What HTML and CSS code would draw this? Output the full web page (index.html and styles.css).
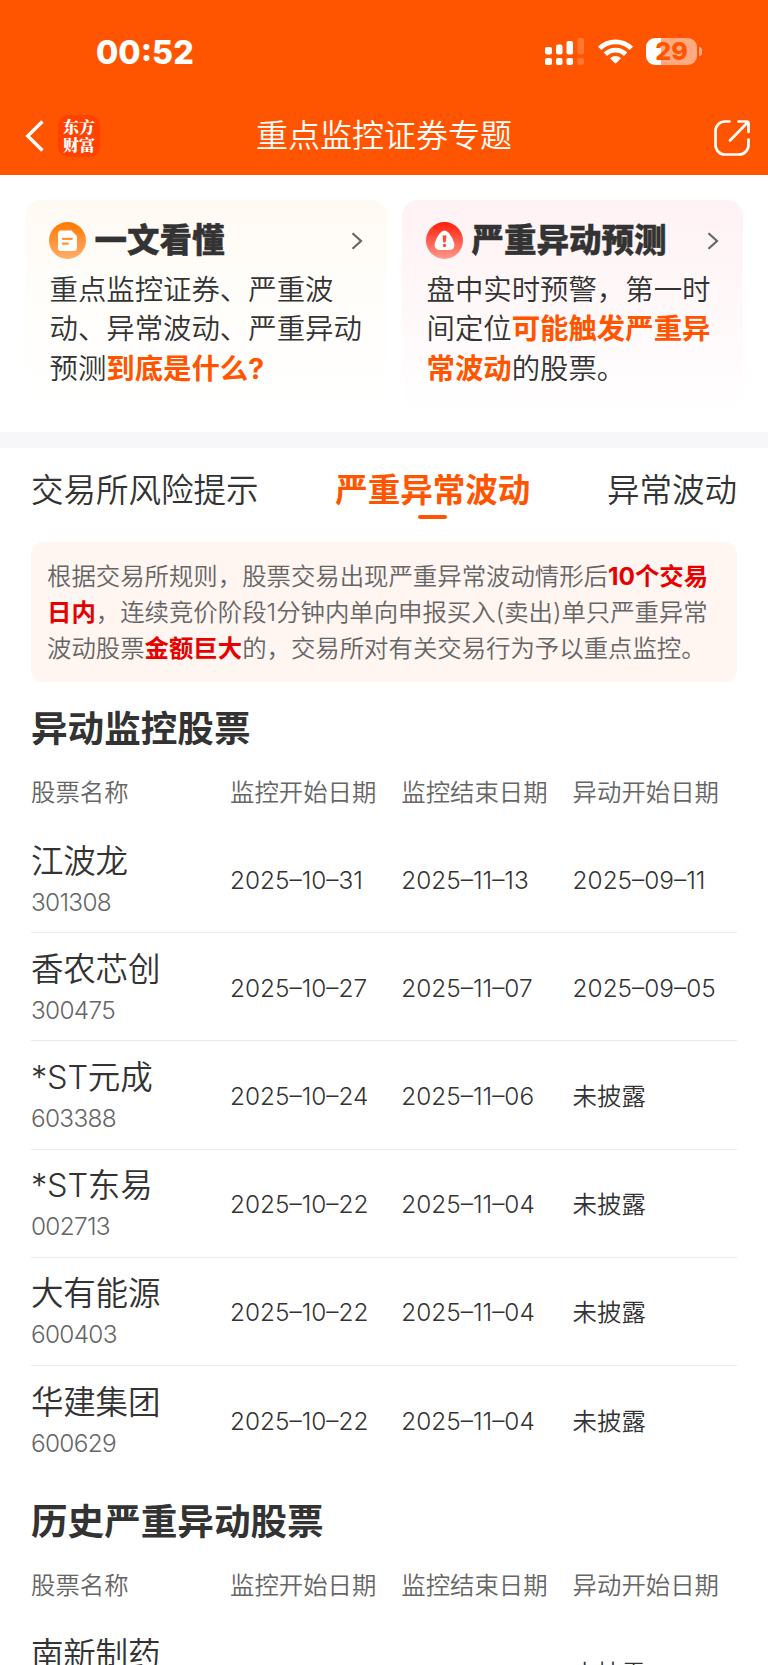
FILE: index.html
```html
<!DOCTYPE html>
<html lang="zh-CN">
<head>
    <meta charset="UTF-8">
    <meta name="viewport" content="width=device-width, initial-scale=1.0">
    <title>重点监控证券专题</title>
    <link rel="stylesheet" href="styles.css">
</head>
<body>

<header class="header">
    <div class="status-bar">
        <span class="time">00:52</span>
        <div class="status-icons">
            <svg width="39" height="27" viewBox="0 0 39 27" fill="#fff">
                <rect x="0" y="9" width="7" height="7.5" rx="2"/>
                <rect x="11" y="6.5" width="6.5" height="10" rx="2"/>
                <rect x="21.5" y="3" width="6.5" height="13.5" rx="2"/>
                <rect x="32.5" y="0" width="6.5" height="16.5" rx="2" opacity=".2"/>
                <rect x="0" y="20" width="7" height="7" rx="2"/>
                <rect x="11" y="20" width="6.5" height="7" rx="2"/>
                <rect x="21.5" y="20" width="6.5" height="7" rx="2"/>
                <rect x="32.5" y="20" width="6.5" height="7" rx="2" opacity=".2"/>
            </svg>
            <svg class="wifi" width="35" height="25" viewBox="0 0 35 25">
                <g fill="none" stroke="#fff" stroke-width="4.8">
                    <path d="M1.700 9.400a22.500 22.500 0 0 1 31.600 0"/>
                    <path d="M7.400 15.200a14.400 14.400 0 0 1 20.200 0"/>
                </g>
                <path fill="#fff" d="M12 19.200a8 8 0 0 1 11 0l-4.700 4.900q-.8.800-1.600 0z"/>
            </svg>
            <div class="battery"><span>29</span></div>
        </div>
    </div>
    <nav class="nav">
        <div class="nav-left">
            <svg width="20" height="32" viewBox="0 0 20 32" fill="none" stroke="#fff" stroke-width="3.4">
                <path d="M17.500 1.500 2.700 16l14.800 14.500"/>
            </svg>
            <div class="logo">东方<br>财富</div>
        </div>
        <h1>重点监控证券专题</h1>
        <svg class="share" width="36" height="36" viewBox="0 0 36 36" fill="none" stroke="#fff" stroke-width="2.700" stroke-linecap="round" stroke-linejoin="round">
            <path d="M15.500 1.500H11A9.500 9.500 0 0 0 1.500 11v14A9.500 9.500 0 0 0 11 34.500h14a9.500 9.500 0 0 0 9.500-9.500v-5.500"/>
            <path d="M24.500 1.500h8q2 0 2 2v8.500M34 2 16 20.500"/>
        </svg>
    </nav>
</header>

<section class="cards">
    <a class="card card-guide">
        <div class="card-head">
            <svg width="37" height="37" viewBox="0 0 37 37">
                <defs>
                    <linearGradient id="orange" x1="0" y1="0" x2="0" y2="1">
                        <stop offset="0" stop-color="#ff7a00"/>
                        <stop offset="1" stop-color="#ffae6b"/>
                    </linearGradient>
                </defs>
                <circle cx="18.500" cy="18.500" r="18.500" fill="url(#orange)"/>
                <path fill="#fff" d="M12 8.500h10.500l5.500 5.800V26a3 3 0 0 1-3 3H12a3 3 0 0 1-3-3V11.500a3 3 0 0 1 3-3z"/>
                <path d="M13.800 16.800h9M13.800 21.700h5" stroke="#ff9334" stroke-width="2.200" stroke-linecap="round"/>
            </svg>
            <h2>一文看懂</h2>
            <svg class="arrow" width="12" height="18" viewBox="0 0 12 18"><path d="M1.500 1.200 10 9l-8.500 7.800"/></svg>
        </div>
        <p>重点监控证券、严重波<br>动、异常波动、严重异动<br>预测<b>到底是什么?</b></p>
    </a>
    <a class="card card-predict">
        <div class="card-head">
            <svg width="37" height="37" viewBox="0 0 37 37">
                <defs>
                    <linearGradient id="red" x1="0" y1="0" x2="0" y2="1">
                        <stop offset="0" stop-color="#ff1e0a"/>
                        <stop offset="1" stop-color="#ff9a8c"/>
                    </linearGradient>
                </defs>
                <circle cx="18.500" cy="18.500" r="18.500" fill="url(#red)"/>
                <path fill="#fff" d="M14 11q4.500-5 9 0 4 5 5.300 10.500.8 6-4.800 6.500h-10q-5.600-.5-4.800-6.500Q10 16 14 11z"/>
                <path d="M16.500 13.500h4l-.8 7h-2.400z" fill="#ff4937"/>
                <circle cx="18.500" cy="23.400" r="1.700" fill="#ff4937"/>
            </svg>
            <h2>严重异动预测</h2>
            <svg class="arrow" width="12" height="18" viewBox="0 0 12 18"><path d="M1.500 1.200 10 9l-8.500 7.800"/></svg>
        </div>
        <p>盘中实时预警，第一时<br>间定位<b>可能触发严重异<br>常波动</b>的股票。</p>
    </a>
</section>

<div class="tabs">
    <a class="tab">交易所风险提示</a>
    <a class="tab active">严重异常波动</a>
    <a class="tab">异常波动</a>
</div>

<p class="notice">根据交易所规则，股票交易出现严重异常波动情形后<b>10个交易<br>日内</b>，连续竞价阶段1分钟内单向申报买入(卖出)单只严重异常<br>波动股票<b>金额巨大</b>的，交易所对有关交易行为予以重点监控。</p>

<section class="stocks">
    <h3>异动监控股票</h3>
    <div class="row row-head">
        <span>股票名称</span><span>监控开始日期</span><span>监控结束日期</span><span>异动开始日期</span>
    </div>
    <div class="row">
        <div class="stock"><strong>江波龙</strong><small>301308</small></div>
        <span>2025–10–31</span><span>2025–11–13</span><span>2025–09–11</span>
    </div>
    <div class="row">
        <div class="stock"><strong>香农芯创</strong><small>300475</small></div>
        <span>2025–10–27</span><span>2025–11–07</span><span>2025–09–05</span>
    </div>
    <div class="row">
        <div class="stock"><strong>*ST元成</strong><small>603388</small></div>
        <span>2025–10–24</span><span>2025–11–06</span><span>未披露</span>
    </div>
    <div class="row">
        <div class="stock"><strong>*ST东易</strong><small>002713</small></div>
        <span>2025–10–22</span><span>2025–11–04</span><span>未披露</span>
    </div>
    <div class="row">
        <div class="stock"><strong>大有能源</strong><small>600403</small></div>
        <span>2025–10–22</span><span>2025–11–04</span><span>未披露</span>
    </div>
    <div class="row">
        <div class="stock"><strong>华建集团</strong><small>600629</small></div>
        <span>2025–10–22</span><span>2025–11–04</span><span>未披露</span>
    </div>
</section>

<section class="stocks">
    <h3>历史严重异动股票</h3>
    <div class="row row-head">
        <span>股票名称</span><span>监控开始日期</span><span>监控结束日期</span><span>异动开始日期</span>
    </div>
    <div class="row">
        <div class="stock"><strong>南新制药</strong><small>&nbsp;</small></div>
        <span></span><span></span><span>未披露</span>
    </div>
</section>

</body>
</html>
```
FILE: styles.css
```css
* {
    box-sizing: border-box;
    margin: 0;
    padding: 0;
}

body {
    width: 768px;
    height: 1665px;
    overflow: hidden;
    background: #fff;
    color: #333;
    font-family: Inter, "Noto Sans CJK SC", sans-serif;
    font-weight: 350;
}

svg {
    display: block;
    flex-shrink: 0;
}

.header {
    height: 175px;
    background: #ff5500;
    color: #fff;
}

.status-bar {
    display: flex;
    justify-content: space-between;
    align-items: center;
    height: 103px;
    padding: 0 71px 0 96px;
}

.time {
    font-size: 32.3px;
    font-weight: 800;
    line-height: 40px;
    padding-top: 3px;
}

.status-icons {
    display: flex;
    align-items: center;
}

.wifi {
    margin: 0 13px 0 14px;
}

.battery {
    position: relative;
    width: 51px;
    height: 27px;
    border-radius: 9px;
    background: linear-gradient(90deg, #fff 15px, #ffaa80 15px);
    color: #ff5500;
    font-size: 25px;
    font-weight: 800;
    line-height: 27px;
    text-align: center;
}

.battery::after {
    content: "";
    position: absolute;
    right: -5px;
    top: 9px;
    width: 3px;
    height: 9px;
    border-radius: 0 4px 4px 0;
    background: #ffaa80;
}

.nav {
    display: grid;
    grid-template-columns: 1fr auto 1fr;
    align-items: center;
    height: 66px;
    padding: 0 18px;
}

.nav-left {
    display: flex;
    align-items: center;
    gap: 13px;
    padding-left: 7px;
}

.logo {
    width: 42px;
    height: 42px;
    padding-top: 3px;
    border-radius: 10px;
    background: #ff4200;
    font-family: "Noto Serif CJK SC", "Noto Sans CJK SC", sans-serif;
    font-size: 16px;
    font-weight: 900;
    line-height: 17.5px;
    text-align: center;
}

.nav h1 {
    font-size: 32px;
    font-weight: 350;
    line-height: 44px;
}

.share {
    justify-self: end;
    margin-top: 4px;
}

.cards {
    display: flex;
    gap: 15px;
    height: 273px;
    padding: 24.5px 25px 0;
    border-bottom: 16px solid #f7f7fa;
}

.card {
    width: 362px;
    height: 213px;
    padding: 22.5px 24px 0;
    border-radius: 16px;
}

.card-guide {
    background: linear-gradient(#fff9f3, #fffdf9 35%, #fff);
}

.card-predict {
    width: 341px;
    background: linear-gradient(#fff2f4, #fff9fa 60%, #fff);
}

.card-head {
    display: flex;
    align-items: center;
    height: 37px;
}

.card-head h2 {
    flex: 1;
    margin-left: 8.5px;
    font-size: 32.5px;
    font-weight: 900;
    line-height: 36px;
    -webkit-text-stroke: 0.4px #333;
}

.arrow {
    fill: none;
    stroke: #666;
    stroke-width: 2.2;
}

.card p {
    margin-top: 11px;
    padding-left: 0.5px;
    font-size: 28.4px;
    line-height: 39.4px;
    white-space: nowrap;
}

.card b {
    color: #ff5500;
}

.tabs {
    display: flex;
    justify-content: space-between;
    height: 94px;
    padding: 18px 31px 0;
}

.tab {
    height: 54px;
    font-size: 32.5px;
    line-height: 49px;
}

.tab.active {
    display: flex;
    flex-direction: column;
    align-items: center;
    color: #ff5500;
    font-weight: 700;
}

.tab.active::after {
    content: "";
    width: 29px;
    height: 4px;
    border-radius: 2px;
    background: #ff5500;
}

.notice {
    height: 140px;
    margin: 0 31px;
    padding: 17px 16px 0;
    border-radius: 12px;
    background: #fff5f1;
    color: #666;
    font-size: 24.4px;
    line-height: 35.8px;
    white-space: nowrap;
}

.notice b {
    color: #e60000;
}

b {
    font-weight: 700;
}

.stocks {
    padding: 0 31px;
}

.stocks h3 {
    height: 77px;
    padding-top: 20px;
    font-size: 36.6px;
    font-weight: 700;
    line-height: 54px;
}

.stocks + .stocks {
    padding-top: 1px;
}

.row {
    display: grid;
    grid-template-columns: 199px 171.3px 171.3px 1fr;
    align-items: center;
    height: 108.2px;
    padding-top: 2px;
    border-bottom: 1px solid #eaeaea;
    font-size: 24.4px;
    line-height: 36px;
    white-space: nowrap;
}

.row:last-child {
    border-bottom: none;
}

.row-head {
    height: 66px;
    padding-top: 0;
    border-bottom: none;
    color: #666;
}

.stock {
    margin-top: -2px;
}

.stock strong,
.stock small {
    display: block;
    font-weight: 350;
}

.stock strong {
    font-size: 32.5px;
    line-height: 46px;
    letter-spacing: -0.2px;
}

.stock small {
    color: #666;
    font-size: 24.4px;
    line-height: 34px;
    letter-spacing: -0.7px;
}
```
